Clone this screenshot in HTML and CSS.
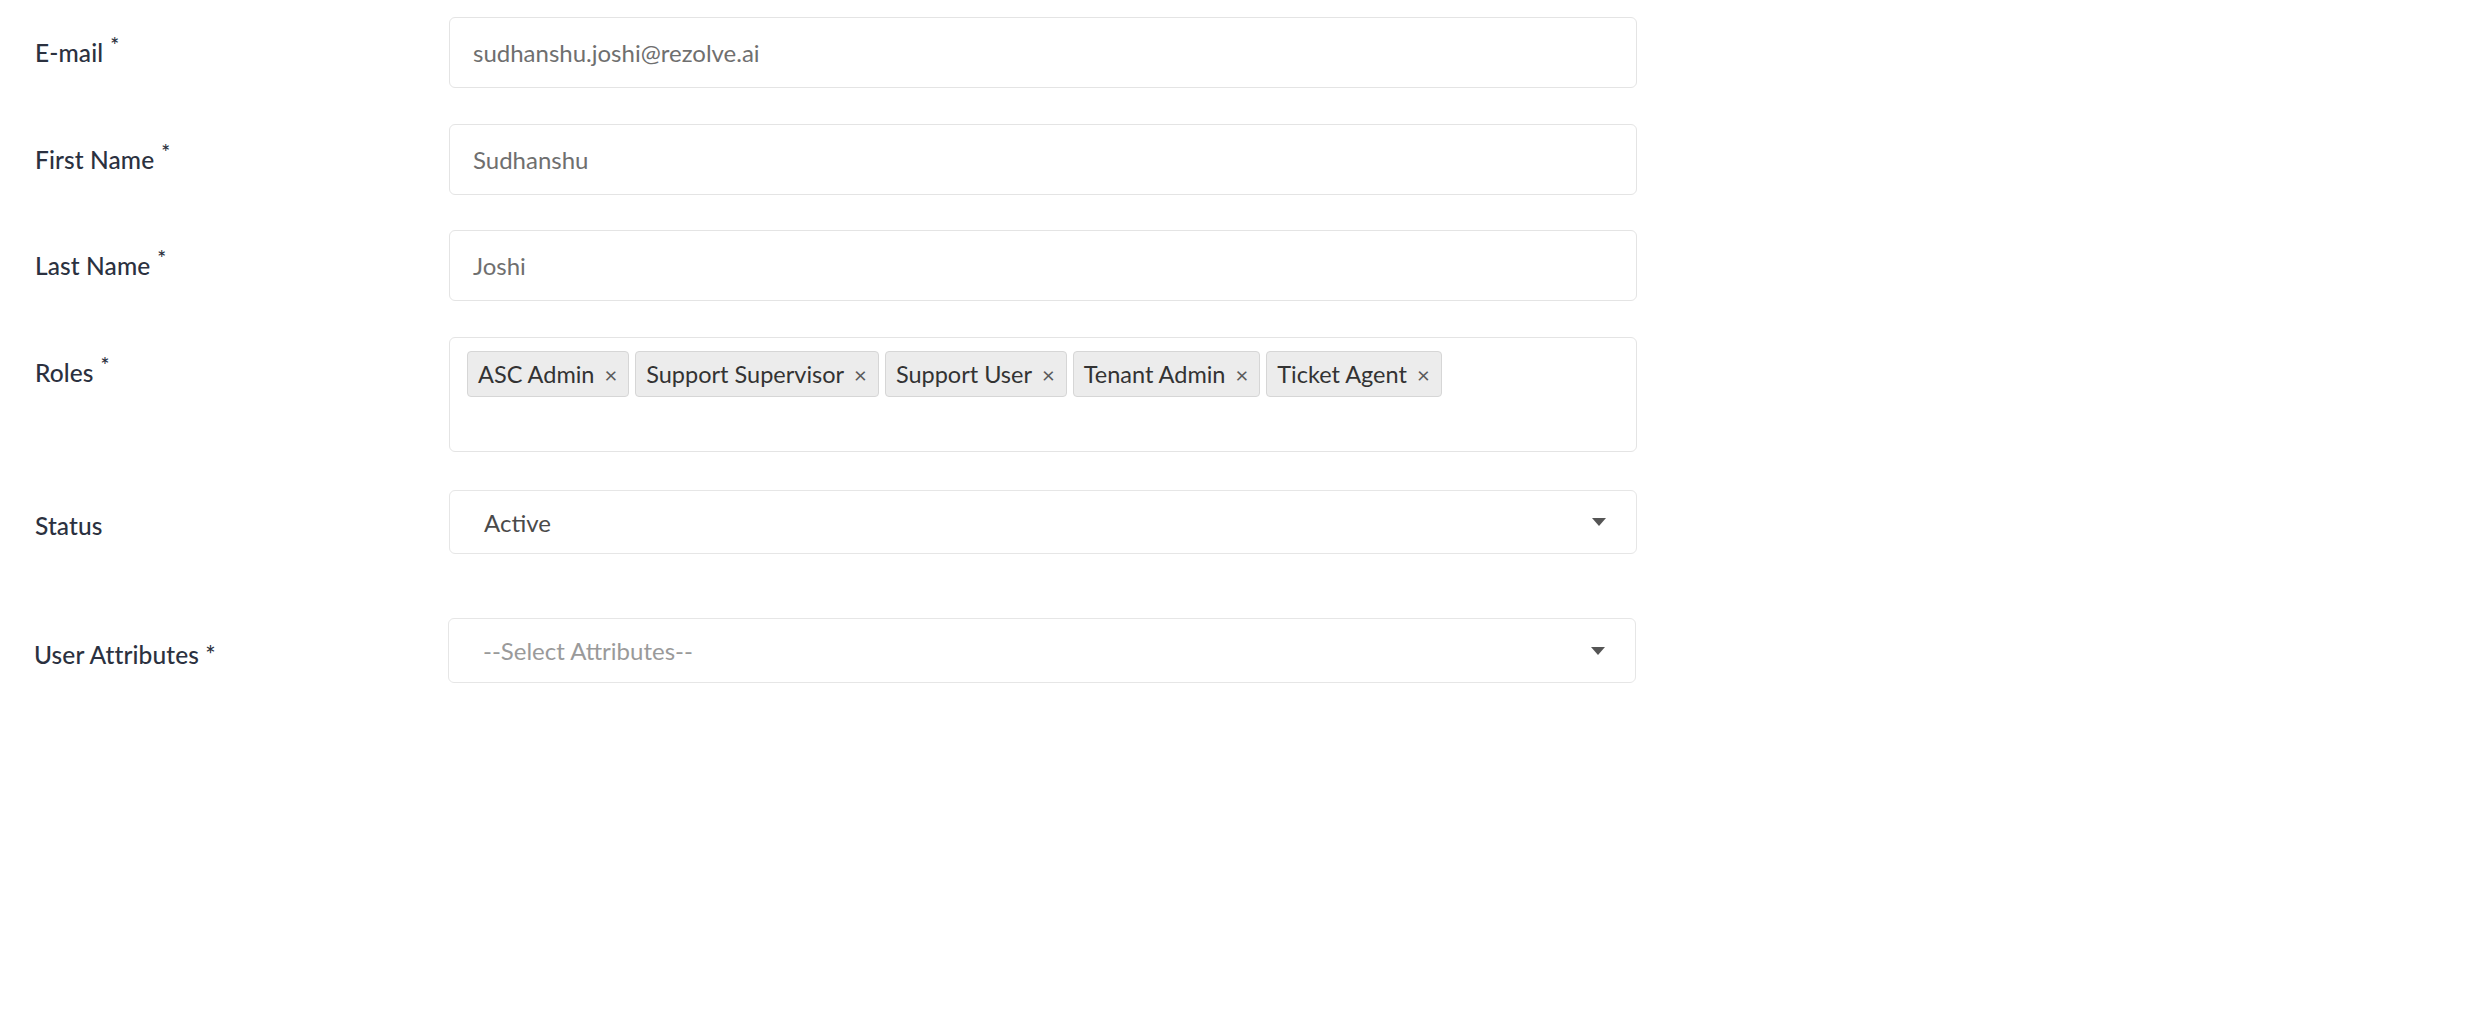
FILE: index.html
```html
<!DOCTYPE html>
<html lang="en">
<head>
<meta charset="utf-8">
<title>User form</title>
<link rel="stylesheet" href="styles.css">
</head>
<body>
<main class="form">
  <div class="row row-email">
    <label class="lbl">E-mail <sup class="req">*</sup></label>
    <div class="input">sudhanshu.joshi@rezolve.ai</div>
  </div>
  <div class="row row-first">
    <label class="lbl">First Name <sup class="req">*</sup></label>
    <div class="input">Sudhanshu</div>
  </div>
  <div class="row row-last">
    <label class="lbl">Last Name <sup class="req">*</sup></label>
    <div class="input">Joshi</div>
  </div>
  <div class="row row-roles">
    <label class="lbl">Roles <sup class="req">*</sup></label>
    <div class="tags">
      <span class="tag">ASC Admin<span class="x">×</span></span>
      <span class="tag">Support Supervisor<span class="x">×</span></span>
      <span class="tag">Support User<span class="x">×</span></span>
      <span class="tag">Tenant Admin<span class="x">×</span></span>
      <span class="tag">Ticket Agent<span class="x">×</span></span>
    </div>
  </div>
  <div class="row row-status">
    <label class="lbl lbl-select">Status</label>
    <div class="select select-status">
      <span class="value">Active</span>
      <span class="caret"></span>
    </div>
  </div>
  <div class="row row-attr">
    <label class="lbl lbl-select lbl-attr">User Attributes *</label>
    <div class="select select-attr">
      <span class="placeholder">--Select Attributes--</span>
      <span class="caret"></span>
    </div>
  </div>
</main>
</body>
</html>
```
FILE: styles.css
```css
html, body {
  margin: 0;
  padding: 0;
  background: #ffffff;
}

body {
  font-family: "Lato", "Noto Sans", "Liberation Sans", sans-serif;
}

.form {
  padding: 17px 0 0 35px;
}

.row {
  display: flex;
  align-items: flex-start;
}

.row-email { margin-bottom: 36px; }
.row-first { margin-bottom: 35px; }
.row-last { margin-bottom: 36px; }
.row-roles { margin-bottom: 38px; }
.row-status { margin-bottom: 64px; }
.row-attr { margin-left: -1px; }

.lbl {
  box-sizing: border-box;
  flex: none;
  width: 414px;
  height: 71px;
  display: flex;
  align-items: center;
  font-size: 24.5px;
  font-weight: 500;
  color: #2b3140;
  letter-spacing: 0.1px;
}

.req {
  font-size: 21px;
  align-self: center;
  margin-left: 7px;
  margin-top: -16px;
  line-height: 1;
  font-weight: 500;
}

.input {
  box-sizing: border-box;
  width: 1188px;
  height: 71px;
  border: 1.5px solid #e4e4e4;
  border-radius: 6px;
  padding: 0 23px;
  display: flex;
  align-items: center;
  font-size: 24px;
  color: #6f6f6f;
}

.tags {
  box-sizing: border-box;
  width: 1188px;
  min-height: 115px;
  border: 1.5px solid #e4e4e4;
  border-radius: 6px;
  padding: 13px 17px;
  display: flex;
  flex-wrap: wrap;
  align-content: flex-start;
  gap: 6px;
}

.tag {
  box-sizing: border-box;
  height: 46px;
  display: inline-flex;
  align-items: center;
  padding: 0 11px 0 10px;
  background: #ececec;
  border: 1.5px solid #d6d6d6;
  border-radius: 4px;
  font-size: 23.5px;
  color: #333333;
}

.x {
  margin-left: 10px;
  font-size: 22px;
  color: #5a5a5a;
}

.lbl-select {
  height: 64px;
  padding-top: 7px;
}

.lbl-attr {
  height: 65px;
}

.select {
  box-sizing: border-box;
  width: 1188px;
  height: 64px;
  border: 1.5px solid #e6e6e6;
  border-radius: 6px;
  padding: 0 30px 0 34px;
  display: flex;
  align-items: center;
  justify-content: space-between;
  font-size: 24px;
}

.select-attr {
  height: 65px;
}

.value {
  color: #4a4a4a;
}

.placeholder {
  color: #9a9a9a;
}

.caret {
  width: 0;
  height: 0;
  border-left: 7px solid transparent;
  border-right: 7px solid transparent;
  border-top: 8px solid #555555;
}
```
